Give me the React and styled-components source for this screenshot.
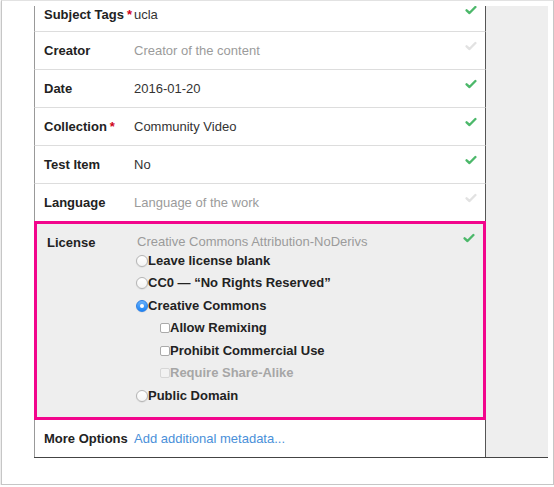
import React from 'react'
import styled, { createGlobalStyle } from 'styled-components'

const Global = createGlobalStyle`
  html, body {
    margin: 0;
    background: #fff;
  }
  body {
    font-family: "Liberation Sans", Arial, sans-serif;
    font-size: 13px;
    color: #222;
  }
`

const Frame = styled.div`
  box-sizing: border-box;
  width: 553px;
  margin-left: 1px;
  padding: 5px 5px 26px 32px;
  border: 1px solid #c6c6c6;
  border-top-color: #e2e2e2;
  box-shadow: 0 1px 2px rgba(0, 0, 0, 0.22);
  background: #fff;
`

const Layout = styled.div`
  display: flex;
  border-bottom: 1px solid #444;
`

const Panel = styled.div`
  width: 452px;
  overflow: hidden;
`

const Sidebar = styled.div`
  flex: 1;
  background: #eee;
`

const Row = styled.div`
  box-sizing: border-box;
  display: grid;
  grid-template-columns: 90px 1fr 10px;
  height: ${p => (p.$last ? '37px' : '38px')};
  padding: 11px 9px 0 9px;
  border-left: 1px solid #999;
  border-right: 1px solid #555;
  border-bottom: ${p => (p.$last ? 'none' : '1px solid #ddd')};
  background: #fff;
`

const TopRow = styled(Row)`
  height: 36px;
  margin-top: -10px;
`

const LicenseRow = styled(Row)`
  height: 199px;
  margin-top: -1px;
  padding: 11px 9px 0 10px;
  border: 3px solid #f2058c;
  background: #eee;
`

const Label = styled.div`
  font-weight: bold;
  line-height: 16px;
  color: #222;
  white-space: nowrap;
`

const Required = styled.span`
  color: #d0021b;
  margin-left: 3px;
`

const Value = styled.div`
  line-height: ${p => (p.$tight ? '14px' : '16px')};
  color: ${p => (p.$placeholder ? '#9b9b9b' : '#333')};
  white-space: nowrap;
`

const Link = styled.a`
  color: #4a90d9;
  text-decoration: none;
`

const CheckWrap = styled.div`
  margin: -3px 0 0 -1px;
  color: ${p => (p.$muted ? '#e2e2e2' : '#4cb86a')};
  svg {
    display: block;
  }
`

const Options = styled.div`
  display: flex;
  flex-direction: column;
`

const Option = styled.label`
  display: flex;
  align-items: center;
  height: 22.5px;
  padding-left: ${p => (p.$nested ? '23px' : '0')};
  font-weight: bold;
  color: ${p => (p.$disabled ? '#a6a6a6' : '#222')};
  white-space: nowrap;
`

const Radio = styled.span`
  box-sizing: border-box;
  flex: none;
  display: flex;
  align-items: center;
  justify-content: center;
  width: 12px;
  height: 12px;
  margin: 1px 0 0 -1px;
  border-radius: 50%;
  border: 1px solid ${p => (p.$on ? '#2b7fe6' : '#b4b4b4')};
  background: ${p =>
    p.$on ? 'linear-gradient(#69b1fa, #1d84f5)' : 'linear-gradient(#fff, #f4f4f4)'};
  box-shadow: 0 0.5px 1px rgba(0, 0, 0, 0.12);
  &::after {
    content: '';
    display: ${p => (p.$on ? 'block' : 'none')};
    width: 4px;
    height: 4px;
    border-radius: 50%;
    background: #fff;
  }
`

const Box = styled.span`
  box-sizing: border-box;
  flex: none;
  width: 10px;
  height: 10px;
  margin-top: 1px;
  border-radius: 2px;
  border: 1px solid ${p => (p.$disabled ? '#d6d6d6' : '#aaa')};
  background: ${p => (p.$disabled ? '#f2f2f2' : '#fff')};
`

const Check = ({ muted }) => (
  <CheckWrap $muted={muted}>
    <svg width="12" height="12" viewBox="0 0 12 12">
      <path
        d="M1.6 6.3 L4.5 9 L10.4 3"
        fill="none"
        stroke="currentColor"
        strokeWidth="2.4"
        strokeLinecap="round"
        strokeLinejoin="round"
      />
    </svg>
  </CheckWrap>
)

const fields = [
  { label: 'Creator', value: 'Creator of the content', placeholder: true },
  { label: 'Date', value: '2016-01-20' },
  { label: 'Collection', value: 'Community Video', required: true },
  { label: 'Test Item', value: 'No' },
  { label: 'Language', value: 'Language of the work', placeholder: true },
]

const App = () => (
  <>
    <Global />
    <Frame>
      <Layout>
        <Panel>
          <TopRow>
            <Label>
              Subject Tags<Required>*</Required>
            </Label>
            <Value>ucla</Value>
            <Check />
          </TopRow>
          {fields.map(f => (
            <Row key={f.label}>
              <Label>
                {f.label}
                {f.required && <Required>*</Required>}
              </Label>
              <Value $placeholder={f.placeholder}>{f.value}</Value>
              <Check muted={f.placeholder} />
            </Row>
          ))}
          <LicenseRow>
            <Label>License</Label>
            <div>
              <Value $placeholder $tight>
                Creative Commons Attribution-NoDerivs
              </Value>
              <Options>
                <Option>
                  <Radio />
                  Leave license blank
                </Option>
                <Option>
                  <Radio />
                  CC0 — “No Rights Reserved”
                </Option>
                <Option>
                  <Radio $on />
                  Creative Commons
                </Option>
                <Option $nested>
                  <Box />
                  Allow Remixing
                </Option>
                <Option $nested>
                  <Box />
                  Prohibit Commercial Use
                </Option>
                <Option $nested $disabled>
                  <Box $disabled />
                  Require Share-Alike
                </Option>
                <Option>
                  <Radio />
                  Public Domain
                </Option>
              </Options>
            </div>
            <Check />
          </LicenseRow>
          <Row $last>
            <Label>More Options</Label>
            <Value>
              <Link href="#">Add additional metadata...</Link>
            </Value>
          </Row>
        </Panel>
        <Sidebar />
      </Layout>
    </Frame>
  </>
)

export default App
